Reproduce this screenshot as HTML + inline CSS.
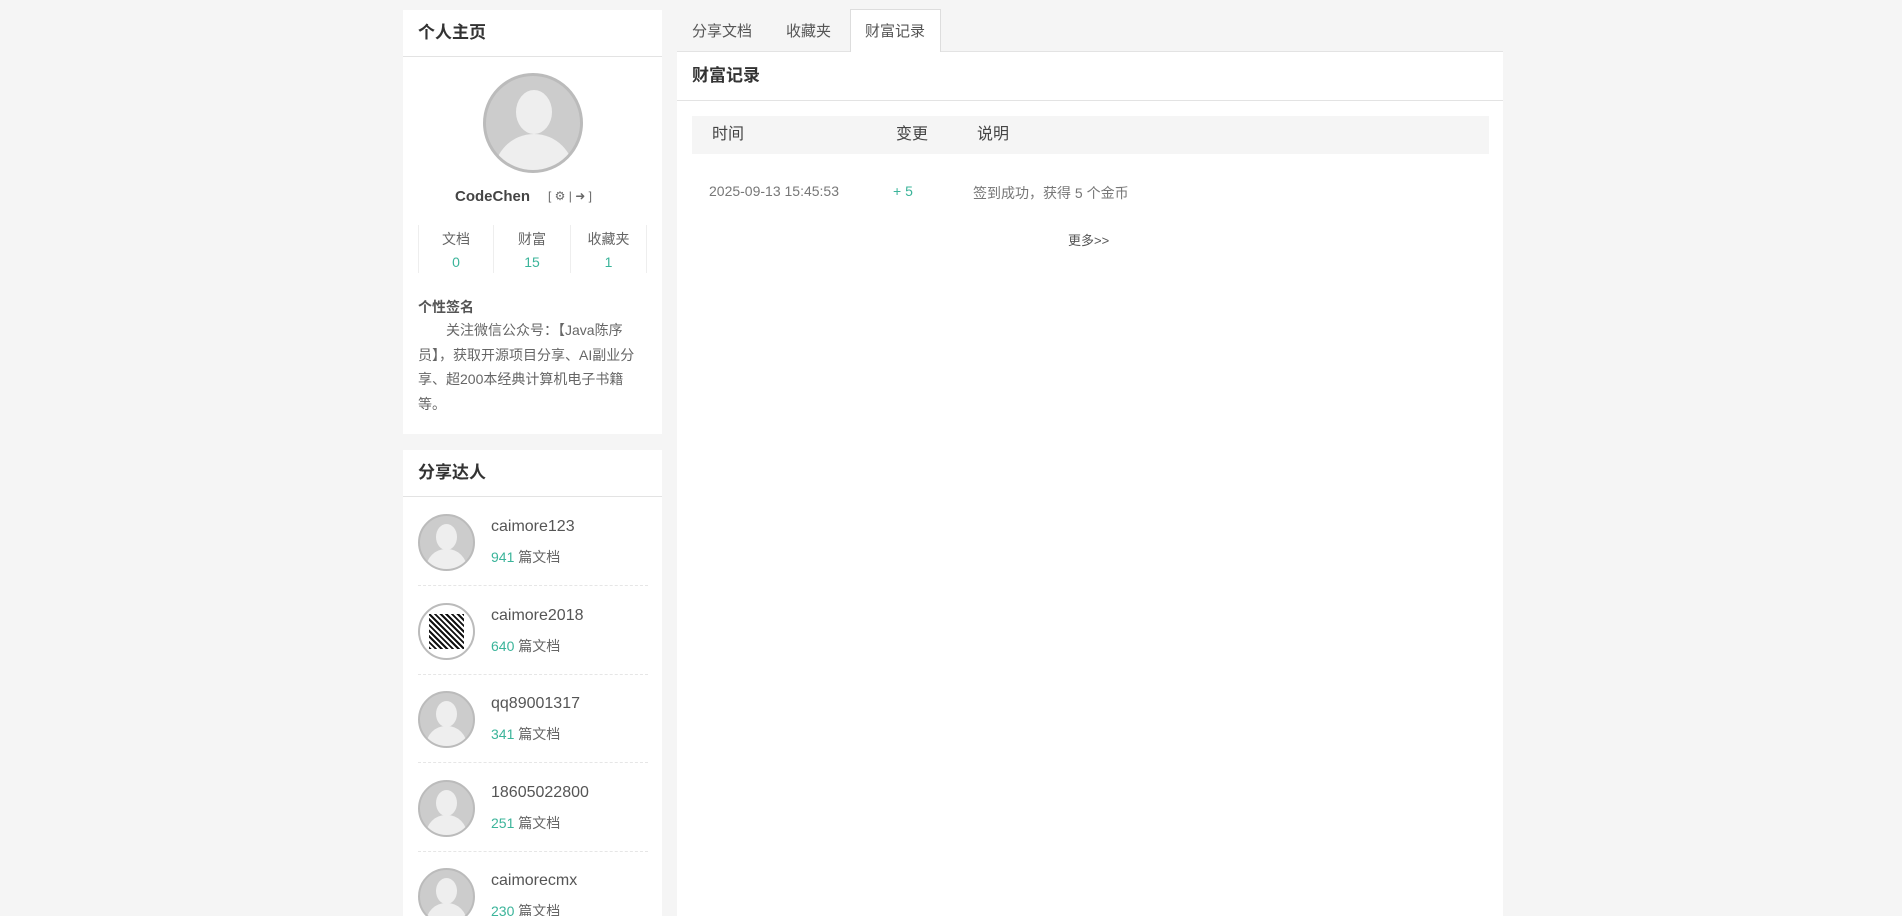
<!DOCTYPE html>
<html><head><meta charset="utf-8"><style>
*{margin:0;padding:0;box-sizing:border-box}
html,body{width:1902px;height:916px;overflow:hidden}
body{background:#f5f5f5;font-family:"Liberation Sans","Noto Sans CJK SC",sans-serif;color:#555;position:relative}
.abs{position:absolute}
.panel{position:absolute;background:#fff}
.ph{height:47px;border-bottom:1px solid #e3e3e3;font-size:17px;font-weight:bold;color:#333;padding:0 0 0 15px;line-height:46px}
.av{position:absolute;border-radius:50%;border:2px solid #bbb;background:#ccc;overflow:hidden}
.av .h{position:absolute;background:#eee;border-radius:50%}
.green{color:#3bb49a}
</style></head><body>

<div class="panel" style="left:403px;top:10px;width:259px;height:424px">
 <div class="ph">个人主页</div>
 <div class="av" style="left:80px;top:63px;width:100px;height:100px;border-width:3px">
  <div class="h" style="left:30px;top:14px;width:36px;height:44px;background:#eee"></div>
  <div class="h" style="left:8px;top:58px;width:80px;height:60px;border-radius:40px 40px 0 0"></div>
 </div>
 <div class="abs" style="left:0;top:178px;width:259px;font-size:15px;">
  <span class="abs" style="left:52px;font-weight:bold;color:#444">CodeChen</span>
  <span class="abs" style="left:145px;top:1px;font-size:12px;color:#666">[ ⚙ | ➜ ]</span>
 </div>
 <div class="abs" style="left:15px;top:215px;width:230px;height:48px;font-size:14px;text-align:center">
  <div class="abs" style="left:0;top:0;width:76px;height:48px;border-left:1px solid #eee;border-right:1px solid #eee"><div style="color:#666;margin-top:4px">文档</div><div class="green" style="margin-top:5px">0</div></div>
  <div class="abs" style="left:76px;top:0;width:77px;height:48px;border-right:1px solid #eee"><div style="color:#666;margin-top:4px">财富</div><div class="green" style="margin-top:5px">15</div></div>
  <div class="abs" style="left:153px;top:0;width:76px;height:48px;border-right:1px solid #eee"><div style="color:#666;margin-top:4px">收藏夹</div><div class="green" style="margin-top:5px">1</div></div>
 </div>
 <div class="abs" style="left:15px;top:287px;font-size:14px;font-weight:bold;color:#555">个性签名</div>
 <div class="abs" style="left:15px;top:308px;width:225px;font-size:14px;line-height:24.5px;color:#666;text-indent:28px">关注微信公众号：【Java陈序员】，获取开源项目分享、AI副业分享、超200本经典计算机电子书籍等。</div>
</div>

<div class="panel" style="left:403px;top:450px;width:259px;height:466px">
 <div class="ph">分享达人</div>
 <div id="list"></div>
</div>

<div class="abs" style="left:677px;top:0;width:826px;height:52px;border-bottom:1px solid #e3e3e3"></div>
<div class="abs" style="left:850px;top:9px;width:91px;height:44px;background:#fff;border:1px solid #ddd;border-bottom:none"></div>
<div class="abs" style="left:692px;top:20px;font-size:15px;color:#555">分享文档</div>
<div class="abs" style="left:786px;top:20px;font-size:15px;color:#555">收藏夹</div>
<div class="abs" style="left:865px;top:20px;font-size:15px;color:#555">财富记录</div>

<div class="panel" style="left:677px;top:52px;width:826px;height:864px">
 <div style="height:49px;border-bottom:1px solid #e3e3e3;font-size:17px;font-weight:bold;color:#333;padding-left:15px;line-height:48px">财富记录</div>
 <div class="abs" style="left:15px;top:64px;width:797px;height:38px;background:#f5f5f5;font-size:16px;color:#444;line-height:38px">
  <span class="abs" style="left:20px">时间</span><span class="abs" style="left:204px">变更</span><span class="abs" style="left:285px">说明</span>
 </div>
 <div class="abs" style="left:32px;top:131px;font-size:14px;color:#777">2025-09-13 15:45:53</div>
 <div class="abs green" style="left:216px;top:131px;font-size:14px">+ 5</div>
 <div class="abs" style="left:296px;top:131px;font-size:14px;color:#777">签到成功，获得 5 个金币</div>
 <div class="abs" style="left:391px;top:178px;font-size:13px;color:#555">更多&gt;&gt;</div>
</div>

<script>
var d=[["caimore123","941"],["caimore2018","640"],["qq89001317","341"],["18605022800","251"],["caimorecmx","230"]];
var h="";
d.forEach(function(x,i){var t=57+i*88.5;
h+='<div class="av" style="left:15px;top:'+(t+7)+'px;width:57px;height:57px;border-width:2px;'+(i==1?'background:#fff':'')+'">'+(i==1?'<div style="position:absolute;left:9px;top:9px;width:35px;height:35px;background:repeating-linear-gradient(45deg,#111 0 2px,#fff 2px 4px),#000"></div>':'<div class="h" style="left:16px;top:8px;width:21px;height:26px"></div><div class="h" style="left:6px;top:33px;width:41px;height:30px;border-radius:20px 20px 0 0"></div>')+'</div>';
h+='<div class="abs" style="left:88px;top:'+(t+11)+'px;font-size:16px;color:#555">'+x[0]+'</div>';
h+='<div class="abs" style="left:88px;top:'+(t+40)+'px;font-size:14px;color:#666"><span class="green">'+x[1]+'</span> 篇文档</div>';
if(i<4)h+='<div class="abs" style="left:15px;top:'+(t+78)+'px;width:230px;border-top:1px dashed #e6e6e6"></div>';
});
document.getElementById('list').innerHTML=h;
</script>
</body></html>
